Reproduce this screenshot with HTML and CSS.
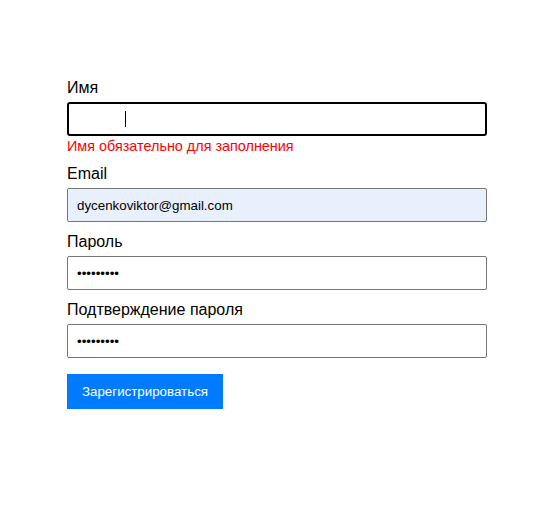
FILE: index.html
```html
<!DOCTYPE html>
<html lang="ru">
<head>
<meta charset="utf-8">
<link rel="stylesheet" href="styles.css">
</head>
<body>
<form class="form">
  <div class="field">
    <label class="label" for="name">Имя</label>
    <div class="input-wrap">
      <input class="input input-focus" id="name" type="text" value="">
      <span class="caret"></span>
    </div>
    <div class="error">Имя обязательно для заполнения</div>
  </div>
  <div class="field">
    <label class="label" for="email">Email</label>
    <input class="input input-autofill" id="email" type="email" value="dycenkoviktor@gmail.com">
  </div>
  <div class="field">
    <label class="label" for="pass">Пароль</label>
    <input class="input" id="pass" type="password" value="123456789">
  </div>
  <div class="field">
    <label class="label" for="pass2">Подтверждение пароля</label>
    <input class="input" id="pass2" type="password" value="123456789">
  </div>
  <button class="btn" type="button">Зарегистрироваться</button>
</form>
</body>
</html>
```

FILE: styles.css
```css
html, body {
  margin: 0;
  background: #fff;
}
body {
  font-family: "Liberation Sans", Arial, sans-serif;
  color: #000;
}
.form {
  display: flex;
  flex-direction: column;
  width: 420px;
  padding: 79px 0 0 67px;
}
.field {
  display: flex;
  flex-direction: column;
  margin-bottom: 11px;
}
.label {
  font-size: 16px;
  line-height: 18px;
  margin-bottom: 5px;
}
.input-wrap {
  position: relative;
}
.input {
  box-sizing: border-box;
  width: 420px;
  height: 34px;
  margin: 0;
  padding: 0 9px;
  border: 1px solid #767676;
  border-radius: 2px;
  background: #fff;
  font-family: "Liberation Sans", Arial, sans-serif;
  font-size: 13.333px;
  color: #000;
  outline: none;
}
.input-focus {
  display: block;
  height: 34px;
  border: 2px solid #000;
  border-radius: 3px;
}
.input-autofill {
  background: #e8f0fe;
}
.caret {
  position: absolute;
  left: 58px;
  top: 9px;
  width: 1px;
  height: 16px;
  background: #000;
}
.error {
  color: #ff0000;
  font-size: 14.4px;
  line-height: 16px;
  margin-top: 2px;
}
.btn {
  align-self: flex-start;
  margin-top: 5px;
  width: 156px;
  height: 35px;
  border: none;
  border-radius: 0;
  background: #007bff;
  color: #fff;
  font-family: "Liberation Sans", Arial, sans-serif;
  font-size: 13.333px;
  padding: 0;
}
```
